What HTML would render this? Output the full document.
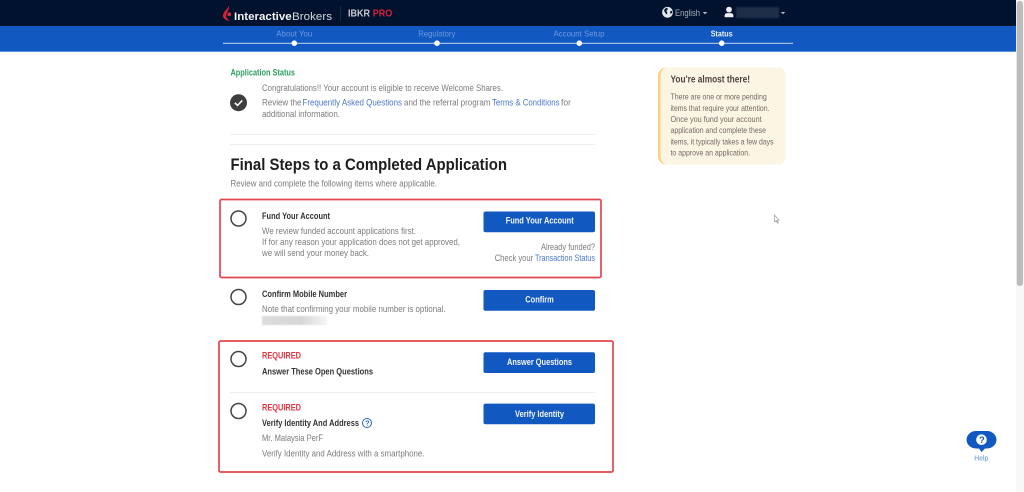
<!DOCTYPE html>
<html lang="en">
<head>
<meta charset="utf-8">
<title>Application Status</title>
<style>
html,body{margin:0;padding:0;background:#fff;width:1024px;height:492px;overflow:hidden}
svg{display:block;position:absolute;left:0;top:0}
text{font-family:"Liberation Sans",sans-serif;font-size:9px;fill:#7c7c7c}
.t{filter:blur(.3px)}
.b{font-weight:bold;fill:#333}
.l{fill:#4a78c8}
.w{font-weight:bold;fill:#f2f6fc;font-size:9.2px}
.s{fill:#6d9adf;font-size:8.6px}
.r{font-weight:bold;fill:#e0343f}
.y{fill:#6f6a64;font-size:8.6px}
</style>
</head>
<body>
<svg width="1024" height="492" viewBox="0 0 1024 492" xmlns="http://www.w3.org/2000/svg">
<defs>
<linearGradient id="g" x1="0" x2="1"><stop offset="0" stop-color="#dcdcdc"/><stop offset=".6" stop-color="#d6d6d6"/><stop offset="1" stop-color="#f6f6f6"/></linearGradient>
</defs>
<rect width="1024" height="492" fill="#fff"/>
<rect x="0" y="0" width="1016" height="26" fill="#00122e"/>
<rect x="0" y="26" width="1016" height="25.5" fill="#1158c0"/>
<rect x="0" y="51" width="1016" height="1" fill="#5b8fdc"/>
<rect x="1016" y="0" width="8" height="492" fill="#f8f8f8"/>
<rect x="1016.7" y="1" width="6.3" height="285" rx="3" fill="#bdbdbd"/>

<!-- logo -->
<path d="M229 5.5 C228 9 223 11.5 223 15.7 C223 18.8 226 20.2 230 21.3 C227.3 19.2 226.2 17.5 226.2 15.5 C226.2 12.5 229.6 10 229 5.5Z" fill="#d81f2e"/>
<circle cx="229.2" cy="14.3" r="1.9" fill="#e02a38"/>
<g class="t">
<text x="234" y="20" style="font-size:11.4px;font-weight:bold;fill:#f4f4f4" textLength="57.7" lengthAdjust="spacingAndGlyphs">Interactive</text>
<text x="292" y="20" style="font-size:11.4px;fill:#d8dade" textLength="40" lengthAdjust="spacingAndGlyphs">Brokers</text>
<text x="348" y="16.6" style="font-size:10px;font-weight:bold;fill:#c9ccd2" textLength="22" lengthAdjust="spacingAndGlyphs">IBKR</text>
<text x="372.7" y="16.6" style="font-size:10px;font-weight:bold;fill:#d8203a" textLength="19.5" lengthAdjust="spacingAndGlyphs">PRO</text>
</g>
<rect x="340" y="6" width="1" height="15" fill="#1a2a45"/>

<!-- globe -->
<circle cx="667.5" cy="12.3" r="5.4" fill="#e2e5ea"/>
<path d="M665 8.6 l2.2 -.8 l.6 1.6 l-1.6 1.6 l1.2 1.6 l-.8 2 l-1.4 -2 l-1.2 -2Z M670 11.5 l2 -.8 l.3 1.6 l-1.6 2Z" fill="#00122e"/>
<text class="t" x="675" y="16" style="font-size:8.8px;fill:#a9afba" textLength="25" lengthAdjust="spacingAndGlyphs">English</text>
<path d="M702.7 12 h4.6 l-2.3 2.4Z" fill="#b5bac4"/>
<!-- user -->
<circle cx="729" cy="9.6" r="2.9" fill="#eceef1"/>
<path d="M724.6 17.3 v-1.6 q0 -2.4 2.6 -2.6 h3.6 q2.6 .2 2.6 2.6 v1.6Z" fill="#eceef1"/>
<rect x="736" y="7" width="43" height="11" fill="#1e2e49" style="filter:blur(.8px)"/>
<path d="M780.8 12 h4.4 l-2.2 2.2Z" fill="#b5bac4"/>

<!-- steps -->
<rect x="223" y="42.8" width="570" height="1" fill="#c4d8f5"/>
<circle cx="294.3" cy="43.2" r="2.8" fill="#fff"/>
<circle cx="437" cy="43.2" r="2.8" fill="#fff"/>
<circle cx="579.3" cy="43.2" r="2.8" fill="#fff"/>
<circle cx="721.7" cy="43.2" r="2.8" fill="#fff"/>
<g class="t">
<text class="s" x="276.3" y="36.7" textLength="36" lengthAdjust="spacingAndGlyphs">About You</text>
<text class="s" x="418.3" y="36.7" textLength="37" lengthAdjust="spacingAndGlyphs">Regulatory</text>
<text class="s" x="553.5" y="36.7" textLength="51" lengthAdjust="spacingAndGlyphs">Account Setup</text>
<text x="710.7" y="36.4" style="font-size:8.6px;font-weight:bold;fill:#e8eefa" textLength="22" lengthAdjust="spacingAndGlyphs">Status</text>

<!-- status -->
<text x="230.5" y="75.6" style="font-weight:bold;fill:#2f9e62" textLength="64.5" lengthAdjust="spacingAndGlyphs">Application Status</text>
<text x="262" y="91" textLength="241" lengthAdjust="spacingAndGlyphs">Congratulations!! Your account is eligible to receive Welcome Shares.</text>
<text x="262" y="105.7" textLength="39.5" lengthAdjust="spacingAndGlyphs">Review the</text>
<text class="l" x="302.5" y="105.7" textLength="99.5" lengthAdjust="spacingAndGlyphs">Frequently Asked Questions</text>
<text x="404" y="105.7" textLength="86.5" lengthAdjust="spacingAndGlyphs">and the referral program</text>
<text class="l" x="492" y="105.7" textLength="67.5" lengthAdjust="spacingAndGlyphs">Terms &amp; Conditions</text>
<text x="561" y="105.7" textLength="10" lengthAdjust="spacingAndGlyphs">for</text>
<text x="262" y="117" textLength="78" lengthAdjust="spacingAndGlyphs">additional information.</text>
</g>
<circle cx="238.5" cy="102.7" r="8.5" fill="#3f3f3f"/>
<path d="M234.8 102.8 l2.7 2.6 l4.8 -5" fill="none" stroke="#fff" stroke-width="1.6"/>
<rect x="230" y="134" width="365" height="1" fill="#efefef"/>
<rect x="230" y="144" width="365" height="1" fill="#efefef"/>

<g class="t">
<text x="230.5" y="170" style="font-size:16.6px;font-weight:bold;fill:#1e1e1e" textLength="276.5" lengthAdjust="spacingAndGlyphs">Final Steps to a Completed Application</text>
<text x="230.5" y="186.7" textLength="206.5" lengthAdjust="spacingAndGlyphs">Review and complete the following items where applicable.</text>
</g>

<!-- red boxes -->
<rect x="220" y="199.5" width="381" height="78" rx="1.5" fill="none" stroke="#e2474f" stroke-width="1.7"/>
<rect x="219" y="341" width="394" height="131" rx="1.5" fill="none" stroke="#e2474f" stroke-width="1.7"/>

<!-- radio circles -->
<g fill="none" stroke="#444" stroke-width="1.5">
<circle cx="238.5" cy="218.5" r="7.5"/>
<circle cx="238.5" cy="297" r="7.5"/>
<circle cx="238.5" cy="359" r="7.5"/>
<circle cx="238.5" cy="411" r="7.5"/>
</g>

<!-- buttons -->
<g fill="#1158c0">
<rect x="483.5" y="211.5" width="111.5" height="20.7" rx="2"/>
<rect x="483.5" y="290" width="111.5" height="20.7" rx="2"/>
<rect x="483.5" y="352.3" width="111.5" height="20.7" rx="2"/>
<rect x="483.5" y="403.6" width="111.5" height="20.7" rx="2"/>
</g>

<rect x="230" y="392" width="365" height="1" fill="#efefef"/>
<rect x="262" y="316" width="65" height="9" fill="url(#g)" style="filter:blur(.8px)"/>

<g class="t">
<text class="b" x="262" y="219" textLength="68" lengthAdjust="spacingAndGlyphs">Fund Your Account</text>
<text x="262" y="234" textLength="154" lengthAdjust="spacingAndGlyphs">We review funded account applications first.</text>
<text x="262" y="245" textLength="198" lengthAdjust="spacingAndGlyphs">If for any reason your application does not get approved,</text>
<text x="262" y="256" textLength="107" lengthAdjust="spacingAndGlyphs">we will send your money back.</text>
<text class="w" x="505.7" y="223.7" textLength="68" lengthAdjust="spacingAndGlyphs">Fund Your Account</text>
<text x="541" y="250" textLength="54" lengthAdjust="spacingAndGlyphs">Already funded?</text>
<text x="494.7" y="261" textLength="38.5" lengthAdjust="spacingAndGlyphs">Check your</text>
<text class="l" x="535" y="261" textLength="60" lengthAdjust="spacingAndGlyphs">Transaction Status</text>

<text class="b" x="262" y="297" textLength="85" lengthAdjust="spacingAndGlyphs">Confirm Mobile Number</text>
<text x="262" y="312" textLength="183.5" lengthAdjust="spacingAndGlyphs">Note that confirming your mobile number is optional.</text>
<text class="w" x="525.3" y="302.3" textLength="28.5" lengthAdjust="spacingAndGlyphs">Confirm</text>

<text class="r" x="262" y="358.7" textLength="39" lengthAdjust="spacingAndGlyphs">REQUIRED</text>
<text class="b" x="262" y="374.7" textLength="111" lengthAdjust="spacingAndGlyphs">Answer These Open Questions</text>
<text class="w" x="507" y="365" textLength="65" lengthAdjust="spacingAndGlyphs">Answer Questions</text>

<text class="r" x="262" y="410.3" textLength="39" lengthAdjust="spacingAndGlyphs">REQUIRED</text>
<text class="b" x="262" y="426" textLength="97" lengthAdjust="spacingAndGlyphs">Verify Identity And Address</text>
<text x="262" y="441" textLength="61" lengthAdjust="spacingAndGlyphs">Mr. Malaysia PerF</text>
<text x="262" y="456.7" textLength="162.5" lengthAdjust="spacingAndGlyphs">Verify Identity and Address with a smartphone.</text>
<text class="w" x="515" y="417" textLength="49" lengthAdjust="spacingAndGlyphs">Verify Identity</text>
</g>
<circle cx="367" cy="423" r="4.5" fill="none" stroke="#2a62c6" stroke-width="1"/>
<text x="365.2" y="425.6" style="font-size:7px;font-weight:bold;fill:#2a62c6">?</text>

<!-- side card -->
<rect x="658" y="67.5" width="127.5" height="97" rx="8" fill="#fbd27b"/>
<path d="M666 67.5 H777.5 a8 8 0 0 1 8 8 V156.5 a8 8 0 0 1 -8 8 H666 a8 8 0 0 1 -5.5 -8 V75.5 a8 8 0 0 1 5.5 -8Z" fill="#fdf5e3"/>
<g class="t">
<text x="670.5" y="82.7" style="font-size:9.8px;font-weight:bold;fill:#4a4540" textLength="79.5" lengthAdjust="spacingAndGlyphs">You're almost there!</text>
<text class="y" x="670.5" y="99.5" textLength="96.2" lengthAdjust="spacingAndGlyphs">There are one or more pending</text>
<text class="y" x="670.5" y="111" textLength="99" lengthAdjust="spacingAndGlyphs">items that require your attention.</text>
<text class="y" x="670.5" y="122" textLength="91.2" lengthAdjust="spacingAndGlyphs">Once you fund your account</text>
<text class="y" x="670.5" y="133" textLength="95.5" lengthAdjust="spacingAndGlyphs">application and complete these</text>
<text class="y" x="670.5" y="144.5" textLength="103" lengthAdjust="spacingAndGlyphs">items, it typically takes a few days</text>
<text class="y" x="670.5" y="155.5" textLength="79.5" lengthAdjust="spacingAndGlyphs">to approve an application.</text>
</g>

<!-- cursor -->
<path d="M774.5 215 v7 l1.6 -1.4 l1.2 2.6 l1 -.5 l-1.2 -2.5 h2Z" fill="#fff" stroke="#999" stroke-width=".7"/>

<!-- help -->
<path d="M976 431 h11 a9.5 9 0 0 1 9.5 9 a9.5 9 0 0 1 -9.5 8.5 h-2 l-3.5 3.5 l-2.5 -3.5 h-3 a9.5 9 0 0 1 -9.5 -8.5 a9.5 9 0 0 1 9.5 -9Z" fill="#1158c0"/>
<circle cx="981.5" cy="439.7" r="5.3" fill="#fff"/>
<text x="979" y="443.2" style="font-size:9.5px;font-weight:bold;fill:#1158c0">?</text>
<text class="t" x="974.3" y="460.7" style="font-size:7.6px;fill:#5e8fd8" textLength="14" lengthAdjust="spacingAndGlyphs">Help</text>
</svg>
</body>
</html>
